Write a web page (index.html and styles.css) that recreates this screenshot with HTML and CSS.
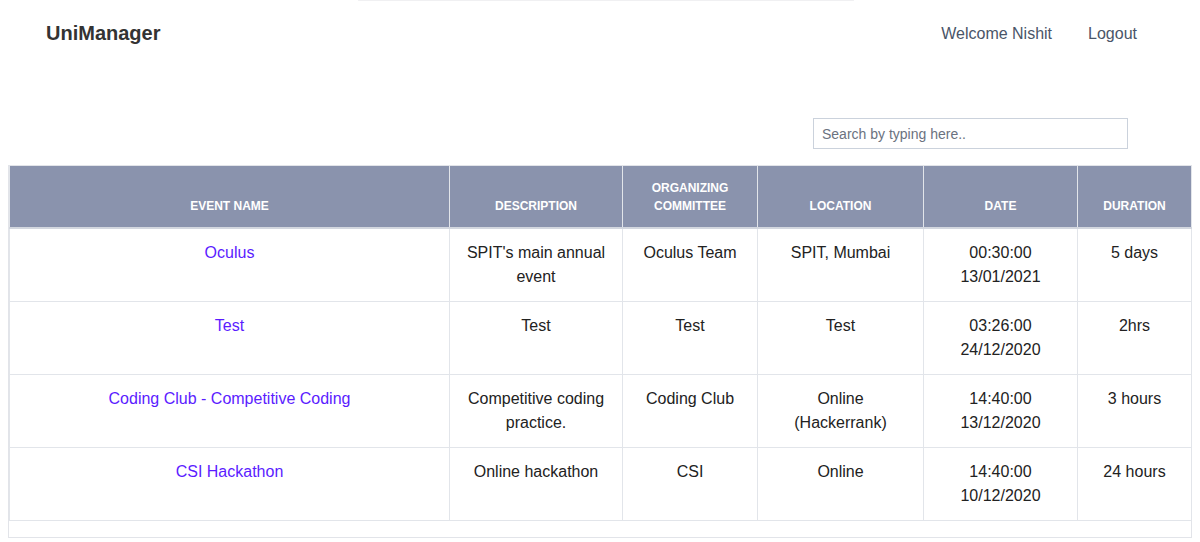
FILE: index.html
```html
<!DOCTYPE html>
<html>
<head>
<meta charset="utf-8">
<link rel="stylesheet" href="styles.css">
</head>
<body>
<div class="topglow"></div>
<nav class="nav">
  <div class="brand">UniManager</div>
  <div class="links">
    <a class="navlink" href="#">Welcome Nishit</a>
    <a class="navlink" href="#">Logout</a>
  </div>
</nav>
<div class="searchbar">
  <input class="search" type="text" placeholder="Search by typing here..">
</div>
<div class="tablewrap">
  <table class="events">
    <colgroup>
      <col class="c1"><col class="c2"><col class="c3"><col class="c4"><col class="c5"><col class="c6">
    </colgroup>
    <thead>
      <tr>
        <th>Event Name</th>
        <th>Description</th>
        <th>Organizing Committee</th>
        <th>Location</th>
        <th>Date</th>
        <th>Duration</th>
      </tr>
    </thead>
    <tbody>
      <tr>
        <td><a class="evlink" href="#">Oculus</a></td>
        <td>SPIT's main annual event</td>
        <td>Oculus Team</td>
        <td>SPIT, Mumbai</td>
        <td>00:30:00<br>13/01/2021</td>
        <td>5 days</td>
      </tr>
      <tr>
        <td><a class="evlink" href="#">Test</a></td>
        <td>Test</td>
        <td>Test</td>
        <td>Test</td>
        <td>03:26:00<br>24/12/2020</td>
        <td>2hrs</td>
      </tr>
      <tr>
        <td><a class="evlink" href="#">Coding Club - Competitive Coding</a></td>
        <td>Competitive coding practice.</td>
        <td>Coding Club</td>
        <td>Online (Hackerrank)</td>
        <td>14:40:00<br>13/12/2020</td>
        <td>3 hours</td>
      </tr>
      <tr>
        <td><a class="evlink" href="#">CSI Hackathon</a></td>
        <td>Online hackathon</td>
        <td>CSI</td>
        <td>Online</td>
        <td>14:40:00<br>10/12/2020</td>
        <td>24 hours</td>
      </tr>
    </tbody>
  </table>
</div>
</body>
</html>
```
FILE: styles.css
```css
* { box-sizing: border-box; }
body {
  margin: 0 8px;
  font-family: "Liberation Sans", Arial, sans-serif;
  color: #222;
  background: #fff;
}
.topglow {
  position: absolute;
  top: 0;
  left: 358px;
  width: 496px;
  height: 1px;
  background: #f0f0f2;
  border-radius: 1px;
}
.nav {
  display: flex;
  justify-content: space-between;
  align-items: center;
  height: 66px;
  padding: 0 37px 0 38px;
}
.brand {
  font-size: 20px;
  font-weight: bold;
  color: #333;
}
.links {
  display: flex;
  padding-top: 1px;
}
.navlink {
  font-size: 16px;
  color: #4a5568;
  text-decoration: none;
  padding: 0 18px;
}
.searchbar {
  display: flex;
  justify-content: flex-end;
  padding: 52px 64px 16px 0;
}
.search {
  width: 315px;
  height: 31px;
  border: 1px solid #cbd2dc;
  padding: 0 8px;
  font-family: "Liberation Sans", Arial, sans-serif;
  font-size: 14px;
  color: #333;
  outline: none;
}
.search::placeholder { color: #6b7280; }
.tablewrap {
  border: 1px solid #e2e4e9;
  padding-bottom: 16px;
}
.events {
  width: 1182px;
  border-collapse: collapse;
  table-layout: fixed;
}
.c1 { width: 440px; }
.c2 { width: 173px; }
.c3 { width: 135px; }
.c4 { width: 166px; }
.c5 { width: 154px; }
.c6 { width: 114px; }
.events th {
  background: #8a93ad;
  color: #fff;
  font-size: 12px;
  font-weight: bold;
  text-transform: uppercase;
  line-height: 18px;
  padding: 13px 8px 12px;
  vertical-align: bottom;
  text-align: center;
  border-left: 1px solid #e2e5ea;
  border-right: 1px solid #e2e5ea;
  border-bottom: 2px solid #d3d7df;
}
.events td {
  font-size: 16px;
  line-height: 24px;
  padding: 12px 16px;
  height: 73px;
  vertical-align: top;
  text-align: center;
  border: 1px solid #e2e5ea;
  color: #222;
}
.evlink {
  color: #5b1cff;
  text-decoration: none;
}
```
